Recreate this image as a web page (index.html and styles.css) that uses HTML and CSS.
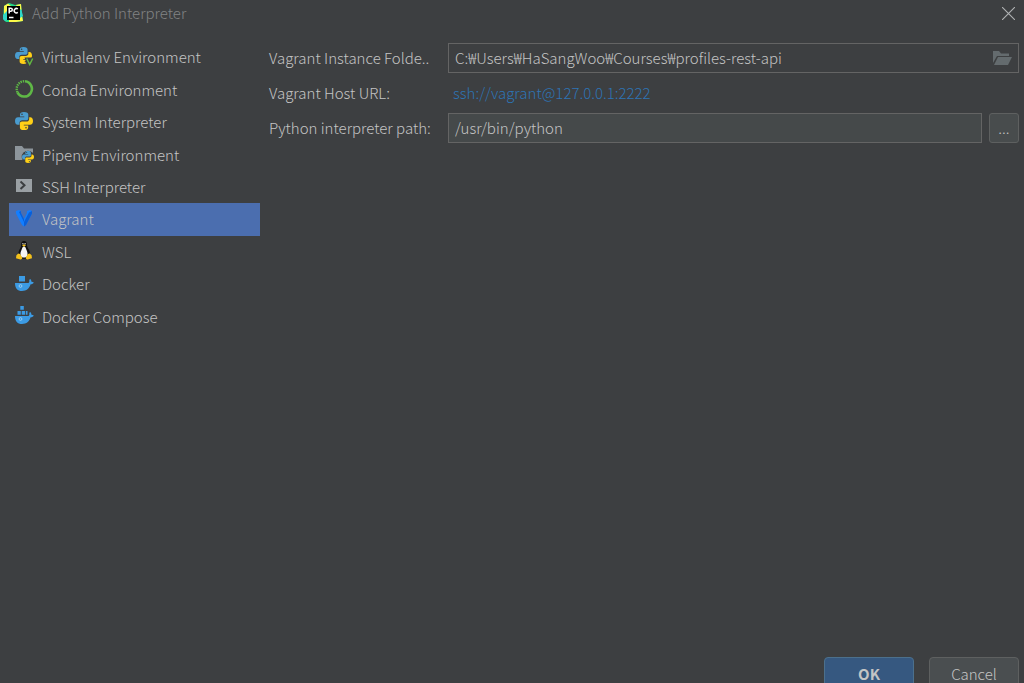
FILE: index.html
```html
<!DOCTYPE html>
<html lang="en">

<head>
    <meta charset="UTF-8">
    <meta name="viewport" content="width=device-width, initial-scale=1.0">
    <title>Add Python Interpreter</title>
    <link rel="stylesheet" href="styles.css">
</head>

<body>
    <!-- shared python logo -->
    <svg class="defs" width="0" height="0" aria-hidden="true">
        <symbol id="python" viewBox="0 0 18 18">
            <path fill="#4a9ccf" d="M9 0C6 0 5 1 5 2.600V4.500h4.300v.7H3C1 5.200 0 6.800 0 9s1 3.800 2.800 3.800h1.700v-2C4.500 9.200 5.700 8.300 7.200 8.300h4C12.600 8.300 13.300 7.400 13.300 6.200V2.600C13.300 1 12 0 9 0z" />
            <circle cx="7" cy="2.300" r=".8" fill="#3c3f41" />
            <path fill="#ffd017" d="M9 18c3 0 4.200-1 4.200-2.600v-1.900H8.800v-.7H15c2 0 3-1.600 3-3.800s-1-3.800-2.800-3.800H14.200v1.800C14.200 8.600 13 9.600 11.400 9.600H7C5.600 9.600 4.900 10.500 4.900 11.700v3.700C4.900 17 6 18 9 18z" />
            <circle cx="11" cy="15.700" r=".8" fill="#3c3f41" />
        </symbol>
    </svg>

    <header class="titlebar">
        <svg class="logo" viewBox="0 0 20 20" aria-hidden="true">
            <path fill="#21d789" d="M1 3l5-3 6 2 6-1 .5 6L20 18l-7 1H3l-3-3z" />
            <path fill="#fcf84a" d="M1 3l4-2.500L8 3 4 9l-3 5zM13 2l5-1 .5 6-3-1zM6 16l13-3 1 5-7 1H6z" />
            <path fill="#2fd6c8" d="M16 6l2.500 1L20 13l-3 2zM0 12l4-4v9l-2 1-2-2z" />
            <rect x="4" y="3" width="13" height="14" fill="#000" />
            <path fill="none" stroke="#fff" stroke-width="1.500" d="M6.200 10.500V5.200h1.600a1.500 1.500 0 0 1 0 3H6.200M14.800 6a2.200 2.200 0 1 0 0 3.400M6 14.500h4.500" />
        </svg>
        <h1 class="title">Add Python Interpreter</h1>
        <button class="close" type="button" aria-label="Close">
            <svg viewBox="0 0 12 12" aria-hidden="true">
                <path fill="none" stroke="#b0b2b3" stroke-width="1" d="M0 0l12 12M12 0L0 12" />
            </svg>
        </button>
    </header>

    <main class="content">
        <nav class="sidebar">
            <a class="item" href="#virtualenv">
                <svg class="icon" viewBox="0 0 20 20" aria-hidden="true">
                    <use href="#python" x="1" y="1" width="17" height="17" />
                    <path fill="#3c3f41" d="M10.500 11.500h9v8h-6.500z" />
                    <path fill="none" stroke="#62b543" stroke-width="1.500" d="M12.700 12.500l3 6 3-6" />
                </svg>
                <span>Virtualenv Environment</span>
            </a>
            <a class="item" href="#conda">
                <svg class="icon" viewBox="0 0 20 20" aria-hidden="true">
                    <path fill="none" stroke="#5fb846" stroke-width="2.600" d="M11 2.300a7.600 7.600 0 1 1-7.500 11" />
                    <path fill="none" stroke="#5fb846" stroke-width="2.400" stroke-dasharray="1.400 .9" d="M3.500 13.300A7.600 7.600 0 0 1 11 2.300" />
                </svg>
                <span>Conda Environment</span>
            </a>
            <a class="item" href="#system">
                <svg class="icon" viewBox="0 0 20 20" aria-hidden="true">
                    <use href="#python" x="1" y="1" width="18" height="18" />
                </svg>
                <span>System Interpreter</span>
            </a>
            <a class="item" href="#pipenv">
                <svg class="icon" viewBox="0 0 20 20" aria-hidden="true">
                    <path fill="#8d959b" d="M1 2h7l2 2.500h9V16H1z" />
                    <circle cx="14" cy="13" r="6.300" fill="#3c3f41" />
                    <use href="#python" x="8" y="7" width="12" height="12" />
                </svg>
                <span>Pipenv Environment</span>
            </a>
            <a class="item" href="#ssh">
                <svg class="icon" viewBox="0 0 20 20" aria-hidden="true">
                    <path fill="#9aa0a4" d="M2 3h16v13H2z" />
                    <path fill="none" stroke="#3c3f41" stroke-width="2" d="M6.500 5.500l4 3.700-4 3.700" />
                </svg>
                <span>SSH Interpreter</span>
            </a>
            <a class="item selected" href="#vagrant" aria-current="page">
                <svg class="icon" viewBox="0 0 20 20" aria-hidden="true">
                    <path fill="#127eff" d="M2 3l3-1 2 1v2l3 6 3-6V3l3-1 2 1v2.500L12 17l-2 1.500L8 17 2 5.500z" />
                    <path fill="#0a5fd8" d="M7 3v2l3 6v3L5 4zM18 3v2.500L12 17l-2 1.500V14l5-9.500z" />
                </svg>
                <span>Vagrant</span>
            </a>
            <a class="item" href="#wsl">
                <svg class="icon" viewBox="0 0 20 20" aria-hidden="true">
                    <path fill="#111" d="M10 0C7.700 0 7 1.600 7.100 3.800c.1 2-.6 3-1.700 5-1 2-1.400 4-1 6l3 3h5.600l3-3c.4-2 0-4-1-6-1.200-2-2-3-2-5C13 1.600 12.300 0 10 0z" />
                    <path fill="#f4f4f4" d="M10 5.500c-1.600 0-1.700 1.700-2.400 3.300-.8 1.800-1.600 3.600-.8 6.200 1 2 5.400 2 6.400 0 .8-2.600 0-4.400-.8-6.200-.7-1.600-.8-3.300-2.400-3.300z" />
                    <path fill="#f5c21b" d="M8 4.300l2-1 2 1-2 1.500zM4.300 12.500l1.800.5 2 3.500c.5 1.500-1 2.300-2.500 1.700L2 17.300l.4-3zM15.700 12.500l-1.800.5-2 3.500c-.5 1.500 1 2.300 2.500 1.700l3.600-.9-.4-3z" />
                    <circle cx="8.900" cy="2.700" r=".7" fill="#ddd" />
                    <circle cx="11.100" cy="2.700" r=".7" fill="#ddd" />
                </svg>
                <span>WSL</span>
            </a>
            <a class="item" href="#docker">
                <svg class="icon" viewBox="0 0 20 20" aria-hidden="true">
                    <path fill="#3c9be4" d="M5 3h6v5.500H5zM1 10h13.500c.8-.5 1-1.500.7-3l.9-.9c1 .8 1.300 1.700 1.400 2.600 1 0 1.800.2 2.300.7-.5 1.200-1.600 1.800-3.200 1.900C15.300 15.500 12.500 18 8 18c-4.500 0-7-2.500-7-8z" />
                    <circle cx="6.500" cy="13" r="1.400" fill="none" stroke="#b8dcf5" stroke-width=".7" />
                </svg>
                <span>Docker</span>
            </a>
            <a class="item" href="#compose">
                <svg class="icon" viewBox="0 0 20 20" aria-hidden="true">
                    <path fill="#3c9be4" d="M6.300 0h3.500v3.800H6.300zM3.500 5h3.300v3.700H3.500zM7.700 5H11v3.700H7.700zM11.800 5h1.700v3.700h-1.700zM1 10h13.500c.8-.5 1-1.500.7-3l.9-.9c1 .8 1.300 1.700 1.400 2.600 1 0 1.800.2 2.300.7-.5 1.200-1.600 1.800-3.200 1.900C15.300 15.500 12.500 18 8 18c-4.500 0-7-2.500-7-8z" />
                    <circle cx="6.500" cy="13" r="1.400" fill="none" stroke="#b8dcf5" stroke-width=".7" />
                </svg>
                <span>Docker Compose</span>
            </a>
        </nav>

        <form class="form" id="interpreter">
            <label for="folder">Vagrant Instance Folde..</label>
            <div class="field folder-field">
                <input type="text" id="folder" value="C:₩Users₩HaSangWoo₩Courses₩profiles-rest-api">
                <button class="browse" type="button" aria-label="Browse">
                    <svg viewBox="0 0 19 14" aria-hidden="true">
                        <path fill="#646b6e" d="M0 0h6l2 2.500h8V5H4L0 12zM5 6h14l-4 8H1z" />
                    </svg>
                </button>
            </div>

            <span>Vagrant Host URL:</span>
            <a class="host" href="ssh://vagrant@127.0.0.1:2222">ssh://vagrant@127.0.0.1:2222</a>

            <label for="path">Python interpreter path:</label>
            <div class="path-row">
                <div class="field path-field">
                    <input type="text" id="path" value="/usr/bin/python">
                </div>
                <button class="more" type="button">...</button>
            </div>
        </form>
    </main>

    <footer class="footer">
        <button class="btn primary" type="submit" form="interpreter">OK</button>
        <button class="btn" type="button">Cancel</button>
    </footer>
</body>

</html>
```
FILE: styles.css
```css
* {
    box-sizing: border-box;
}

body {
    margin: 0;
    height: 100vh;
    display: flex;
    flex-direction: column;
    overflow: hidden;
    background-color: #3d3f41;
    color: #c4c4c4;
    font-family: "Noto Sans CJK KR", "Noto Sans", sans-serif;
    font-size: 15px;
    font-weight: 300;
    line-height: 20px;
}

button,
input {
    font: inherit;
    color: inherit;
}

button {
    padding: 0;
    border: none;
    background: none;
}

.defs {
    position: absolute;
}

/* title bar */
.titlebar {
    display: flex;
    align-items: center;
    height: 26px;
    padding: 0 9px 0 3px;
}

.logo {
    width: 20px;
    height: 20px;
    margin-right: 9px;
}

.title {
    flex: 1;
    margin: 0;
    font-size: 15px;
    font-weight: 300;
    color: #818384;
}

.close,
.browse {
    display: flex;
}

.close svg {
    width: 13px;
    height: 13px;
}

.content {
    flex: 1;
    display: flex;
    gap: 9px;
    padding: 15px 5px 0 9px;
}

/* environment list */
.sidebar {
    display: flex;
    flex-direction: column;
    width: 251px;
    height: 292px;
}

.item {
    flex: 1;
    display: flex;
    align-items: center;
    gap: 8px;
    padding-left: 5px;
    color: inherit;
    text-decoration: none;
}

.icon {
    width: 20px;
    height: 20px;
    margin-bottom: 2px;
}

.selected {
    background-color: #4b6eaf;
}

/* form */
.form {
    flex: 1;
    display: grid;
    grid-template-columns: 170px 1fr;
    grid-template-rows: 30px 20px 30px;
    row-gap: 10px;
    column-gap: 9px;
    align-items: center;
    align-content: start;
    padding-top: 2px;
}

.field {
    display: flex;
    align-items: center;
    flex: 1;
    height: 30px;
    padding: 0 6px;
    border: 1px solid #646464;
}

.field input {
    flex: 1;
    min-width: 0;
    padding: 0;
    border: none;
    outline: none;
    background: none;
}

.browse svg {
    width: 19px;
    height: 14px;
}

.path-field {
    background-color: #45494a;
}

.host {
    padding-left: 5px;
    color: #2d74b5;
    text-decoration: none;
}

.path-row {
    display: flex;
    gap: 7px;
}

.more {
    width: 30px;
    height: 30px;
    border: 1px solid #5e6060;
    border-radius: 3px;
    background-color: #484c4d;
}

/* the buttons run past the bottom edge of the window */
.footer {
    display: flex;
    justify-content: flex-end;
    align-items: flex-start;
    gap: 15px;
    height: 26px;
    padding-right: 5px;
}

.btn {
    width: 90px;
    height: 34px;
    border: 1px solid #5e6060;
    border-radius: 4px;
    background-color: #4a4e50;
}

.primary {
    border-color: #4c708c;
    background-color: #365880;
    font-weight: bold;
}
```
